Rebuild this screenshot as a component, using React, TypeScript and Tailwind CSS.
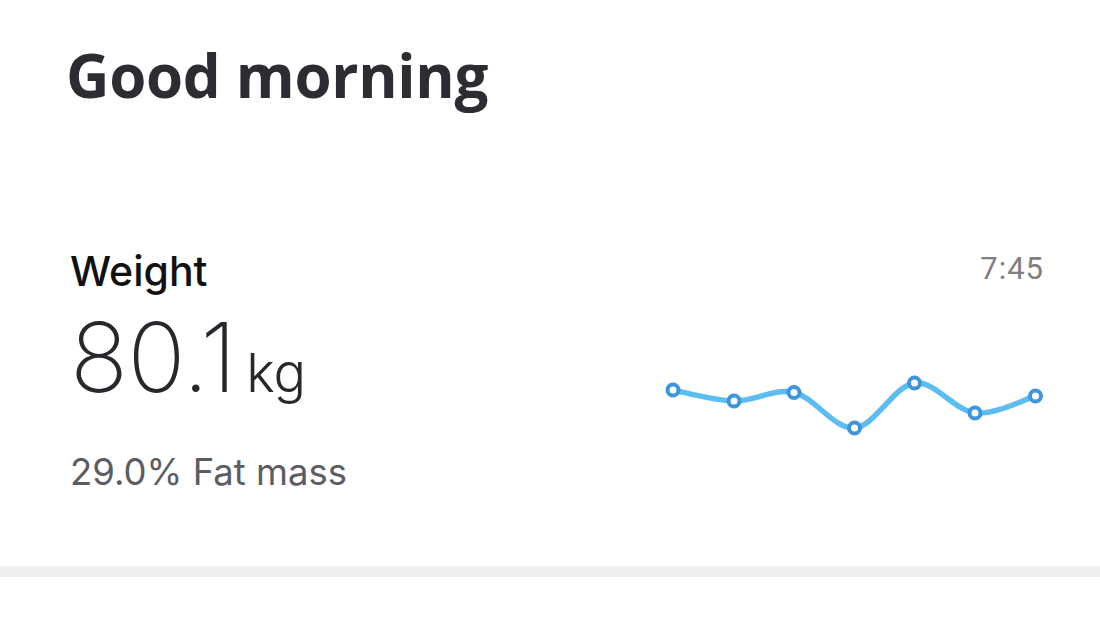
import React from 'react';

// Weight trend, last 7 measurements (chart coordinates)
const points = [
  [8, 19],
  [69, 30],
  [129, 21.5],
  [189.5, 57],
  [249.5, 12],
  [310, 42],
  [370.5, 25],
];

const smoothPath = (pts: number[][]) => {
  let d = `M${pts[0][0]},${pts[0][1]}`;
  for (let i = 0; i < pts.length - 1; i++) {
    const p0 = pts[i - 1] || pts[i];
    const p1 = pts[i];
    const p2 = pts[i + 1];
    const p3 = pts[i + 2] || p2;
    const c1x = p1[0] + (p2[0] - p0[0]) / 6;
    const c1y = p1[1] + (p2[1] - p0[1]) / 6;
    const c2x = p2[0] - (p3[0] - p1[0]) / 6;
    const c2y = p2[1] - (p3[1] - p1[1]) / 6;
    d += ` C${c1x},${c1y} ${c2x},${c2y} ${p2[0]},${p2[1]}`;
  }
  return d;
};

const TrendChart = () => (
  <svg width="380" height="72" viewBox="0 0 380 72" className="block">
    <path d={smoothPath(points)} fill="none" stroke="#5bbdf0" strokeWidth="5.5" strokeLinecap="round" />
    {points.map(([x, y], i) => (
      <circle key={i} cx={x} cy={y} r="5.5" fill="#ffffff" stroke="#3f95dd" strokeWidth="4" />
    ))}
  </svg>
);

const App = () => {
  return (
    <div className="w-[1100px] h-[632px] bg-white overflow-hidden">
      {/* Greeting */}
      <div className="px-[66px] pt-[35px]">
        <h1 className="font-['Open_Sans',sans-serif] font-bold text-[60px] leading-[80px] text-[#2b2d33] tracking-[-0.3px]">
          Good morning
        </h1>
      </div>

      {/* Weight card */}
      <div className="flex justify-between pl-[70px] pr-[56px] pt-[134px] h-[451px]">
        <div className="font-['Inter',sans-serif]">
          <div className="text-[41px] leading-[44px] font-medium text-[#111111]">Weight</div>
          <div className="flex items-baseline mt-[16px] text-[#26282d]">
            <span className="text-[96px] leading-[96px] font-extralight tracking-[-0.5px]">80.1</span>
            <span className="text-[54px] leading-[56px] font-light ml-[10px]">kg</span>
          </div>
          <div className="mt-[47px] text-[36.5px] leading-[40px] text-[#5b5d62]">29.0% Fat mass</div>
        </div>
        <div className="flex flex-col items-end">
          <div className="font-['Roboto',sans-serif] text-[31px] leading-[36px] text-[#808080] mt-[2px] tracking-[1px]">7:45</div>
          <div className="mt-[84px] mr-[-1px]">
            <TrendChart />
          </div>
        </div>
      </div>

      {/* Divider */}
      <div className="h-[11px] bg-[#eeeff1]" />
    </div>
  );
};

export default App;
